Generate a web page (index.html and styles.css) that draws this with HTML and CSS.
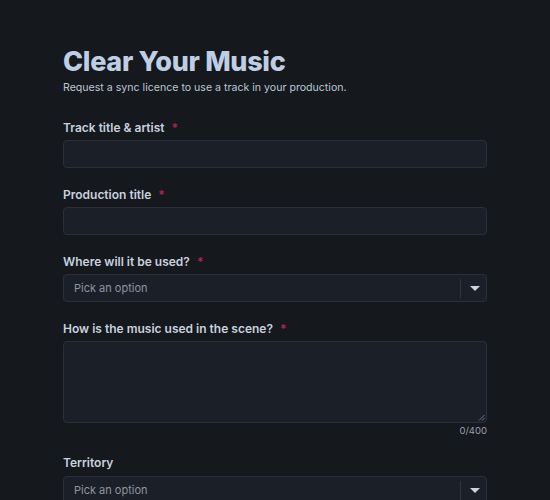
FILE: index.html
```html
<!DOCTYPE html>
<html lang="en">
<head>
<meta charset="utf-8">
<link rel="stylesheet" href="styles.css">
</head>
<body>
<main class="page">
  <header class="head">
    <h1 class="title">Clear Your Music</h1>
    <p class="subtitle">Request a sync licence to use a track in your production.</p>
  </header>
  <form class="form">
    <div class="field">
      <label class="label">Track title &amp; artist <span class="req">*</span></label>
      <div class="input"></div>
    </div>
    <div class="field">
      <label class="label">Production title <span class="req">*</span></label>
      <div class="input"></div>
    </div>
    <div class="field">
      <label class="label">Where will it be used? <span class="req">*</span></label>
      <div class="select">
        <span class="placeholder">Pick an option</span>
        <span class="sep"></span>
        <span class="caret"><svg width="10" height="5" viewBox="0 0 10 5"><path d="M0 0h10L5 5z" fill="#c9d4e3"/></svg></span>
      </div>
    </div>
    <div class="field with-count">
      <label class="label">How is the music used in the scene? <span class="req">*</span></label>
      <div class="textarea">
        <svg class="grip" width="7" height="7" viewBox="0 0 7 7"><path d="M6.5 1L1 6.5M6.5 4L4 6.5" stroke="#6b7380" stroke-width="1"/></svg>
      </div>
      <div class="count">0/400</div>
    </div>
    <div class="field territory">
      <label class="label">Territory</label>
      <div class="select">
        <span class="placeholder">Pick an option</span>
        <span class="sep"></span>
        <span class="caret"><svg width="10" height="5" viewBox="0 0 10 5"><path d="M0 0h10L5 5z" fill="#c9d4e3"/></svg></span>
      </div>
    </div>
  </form>
</main>
</body>
</html>
```
FILE: styles.css
```css
html, body {
  margin: 0;
  padding: 0;
  background: #15181d;
  height: 100%;
  overflow: hidden;
}
body {
  font-family: Inter, "Noto Sans", sans-serif;
  color: #c5cedb;
}
.page {
  width: 424px;
  margin: 0 auto;
  padding-top: 46px;
}
.head {
  margin-bottom: 24px;
}
.title {
  margin: 0;
  font-size: 27px;
  font-weight: 800;
  line-height: 32px;
  letter-spacing: -0.3px;
  color: #bfcee3;
}
.subtitle {
  margin: 2px 0 0;
  font-size: 10.6px;
  line-height: 16px;
  color: #bcc6d3;
}
.form {
  display: flex;
  flex-direction: column;
}
.field {
  display: flex;
  flex-direction: column;
  margin-bottom: 19px;
}
.label {
  font-size: 12px;
  font-weight: 600;
  line-height: 16px;
  margin-bottom: 4px;
  color: #c8d1de;
}
.req {
  color: #b3224f;
  margin-left: 4px;
}
.input, .select, .textarea {
  box-sizing: border-box;
  background: #1b2028;
  border: 1px solid #2a303a;
  border-radius: 4px;
}
.input {
  height: 28px;
}
.select {
  height: 28px;
  display: flex;
  align-items: center;
  padding-left: 10px;
}
.placeholder {
  flex: 1;
  font-size: 11px;
  color: #8c95a2;
}
.sep {
  width: 1px;
  height: 19px;
  background: #30363f;
}
.caret {
  width: 22px;
  padding-left: 3px;
  display: flex;
  justify-content: center;
  align-items: center;
}
.textarea {
  height: 82px;
  position: relative;
}
.grip {
  position: absolute;
  right: 1px;
  bottom: 1px;
}
.count {
  text-align: right;
  font-size: 9.5px;
  line-height: 14px;
  color: #98a1ae;
  margin-top: 1px;
}
.field.with-count {
  margin-bottom: 17px;
}
.territory .label {
  margin-bottom: 5px;
}
```
